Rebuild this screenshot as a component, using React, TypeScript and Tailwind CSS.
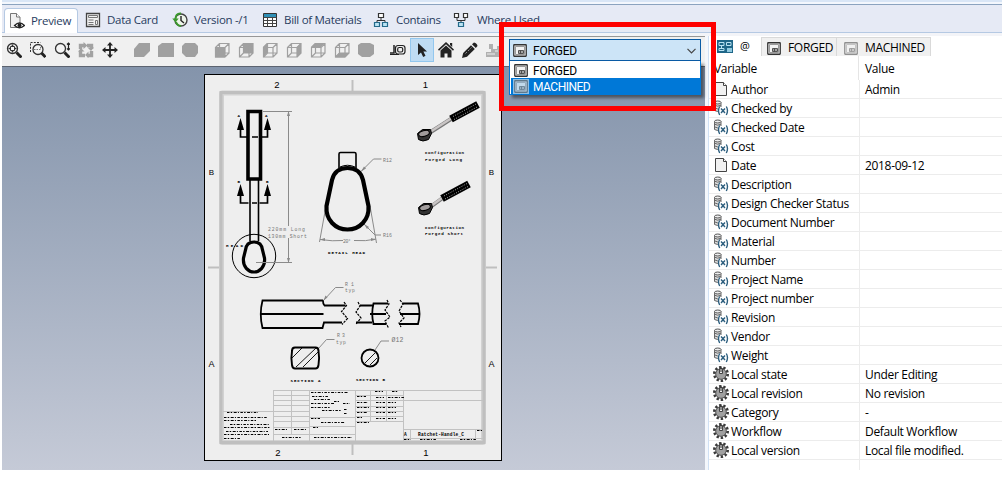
import React from "react";

type Kids = { children: React.ReactNode };

const Ico = ({ children, s = 16 }: Kids & { s?: number }) => (
  <svg width={s} height={s} viewBox="0 0 16 16" fill="none" className="block shrink-0">
    {children}
  </svg>
);

/* ---------- document tabs ---------- */

const PreviewIcon = () => (
  <Ico>
    <path d="M1.500.5h6l3.500 3.500v10.500h-9.500z" fill="#f0f0f0" stroke="#777" />
    <path d="M7.500.5v3.500h3.500" stroke="#777" fill="#fff" />
    <path d="M5.500 12.500q5-5 10 0q-5 4.500-10 0z" fill="#fff" stroke="#222" strokeWidth="1.200" />
    <circle cx="10.500" cy="12.300" r="1.900" fill="#222" />
  </Ico>
);
const CardIcon = () => (
  <Ico>
    <path d="M1.500 1.500h13v13h-13z" fill="#f2f2f2" stroke="#444" strokeWidth="1.300" />
    <path d="M3.500 3.500h9v2h-9zM3.500 8h5M3.500 10.500h5M3.500 12.500h5M10.500 8.500h2v4h-2z" stroke="#777" />
  </Ico>
);
const VersionIcon = () => (
  <Ico>
    <circle cx="9" cy="8" r="6" fill="#eef5ea" stroke="#444" strokeWidth="1.400" />
    <path d="M9 4v4.500l3 2.500" stroke="#222" strokeWidth="1.400" />
    <path d="M9 1.500C5 1 3.500 4 3.500 7" stroke="#3b982e" strokeWidth="2" />
    <path d="M.3 6.500h6.400L3.500 10.500z" fill="#3b982e" />
    <path d="M4 10q1 3.500 5 4" stroke="#3b982e" strokeWidth="2" />
  </Ico>
);
const BomIcon = () => (
  <Ico>
    <path d="M1.500 1.500h13v13h-13z" fill="#fff" stroke="#333" />
    <path d="M2 2h12v3H2z" fill="#2f8fb5" />
    <path d="M1.500 5.500h13M1.500 8.500h13M1.500 11.500h13M5.500 5v9.500M10.500 5v9.500" stroke="#444" />
  </Ico>
);
const ContainsIcon = () => (
  <Ico>
    <path d="M8 6v3M4 11V8.500h8V11" stroke="#333" />
    <path d="M5.500 1.500h5v4h-5z" fill="#fff" stroke="#333" strokeWidth="1.200" />
    <path d="M1.500 10.500h5v4h-5zM9.500 10.500h5v4h-5z" fill="#bce4f4" stroke="#246b8b" strokeWidth="1.200" />
  </Ico>
);
const WhereIcon = () => (
  <Ico>
    <path d="M4 6v2.500h8V6M8 8v3" stroke="#333" />
    <path d="M1.500 1.500h4v4h-4zM10.500 1.500h4v4h-4z" fill="#fff" stroke="#333" strokeWidth="1.200" />
    <path d="M5.500 10.500h5v4h-5z" fill="#bce4f4" stroke="#246b8b" strokeWidth="1.200" />
  </Ico>
);

/* ---------- toolbar ---------- */

const Lens = ({ kind }: { kind: "fit" | "area" | "zoom" }) => (
  <Ico>
    {kind === "area" && <path d="M.5 10V.5h10" stroke="#333" strokeDasharray="2 1.200" />}
    <circle cx={kind === "area" ? 8 : 6.500} cy={kind === "area" ? 7.500 : 6.500} r="5" fill="#f4f4f4" stroke="#333" strokeWidth="1.300" />
    <path d={kind === "area" ? "M11.500 11l4 4" : "M10.500 10.500l5 5"} stroke="#222" strokeWidth="3" />
    {kind === "fit" && (
      <>
        <path d="M4.500 4.500h4v4h-4z" stroke="#333" />
        <path d="M6.500 2.500v8M2.500 6.500h8" stroke="#333" strokeWidth="1.600" strokeDasharray="1.600 4.800" />
      </>
    )}
    {kind === "area" && <path d="M4 7.500h6.500V3" stroke="#777" strokeDasharray="1.500 1" />}
    {kind === "zoom" && <path d="M14.500 1v7M13 2.500L14.500 1l1.500 1.500M13 6.500L14.500 8l1.500-1.500" stroke="#222" strokeWidth="1.200" />}
  </Ico>
);
const RotateIcon = () => (
  <Ico>
    <path d="M2.500 7V3.500H7M9 3.500h4.500V7M2.500 9v4.500H7M9 13.500h4.500V9" stroke="#a2a2a2" strokeWidth="3.400" />
    <path d="M5.500 0v7l4-3.500zM16 5.500H9.500L13 9zM10.500 16V9.500L7 13zM0 9.500h6.500L3 6z" fill="#a2a2a2" />
  </Ico>
);
const PanIcon = () => (
  <Ico>
    <path d="M8 1v14M1 8h14" stroke="#222" strokeWidth="1.800" />
    <path d="M8 0l3 3.500H5zM8 16l3-3.500H5zM0 8l3.500-3v6zM16 8l-3.500-3v6z" fill="#222" />
  </Ico>
);
const Solid = ({ d }: { d: string }) => (
  <Ico>
    <path d={d} fill="#a0a0a0" />
  </Ico>
);
const faces = {
  front: "M1 5h10v10.500H1z",
  back: "M5 1h10v10H5z",
  left: "M1 5l4-4v10l-4 4.500z",
  right: "M11 5l4-4v10l-4 4.500z",
  top: "M1 5l4-4h10l-4 4z",
  bottom: "M1 15.500l4-4.500h10l-4 4.500z",
};
const Wire = ({ face }: { face: keyof typeof faces }) => (
  <Ico>
    <path d={faces[face]} fill="#a0a0a0" />
    <path d="M1.500 5.500h9.500v9.500H1.500zM5.500 1.500H15v9.500H5.500zM1.500 5.500l4-4M11 5.500l4-4M1.500 15l4-4M11 15l4-4" stroke="#a0a0a0" strokeWidth="1.200" />
  </Ico>
);
const MeasureIcon = () => (
  <Ico>
    <path d="M4 3v8H0" stroke="#222" strokeWidth="1.500" />
    <path d="M0 12.500h9" stroke="#222" />
    <rect x="5.500" y="3.500" width="9.500" height="8.500" rx="2.500" fill="#eee" stroke="#222" strokeWidth="1.200" />
    <rect x="7.700" y="5.500" width="5" height="4.500" rx="1.500" stroke="#222" strokeWidth="1.200" />
  </Ico>
);
const CursorIcon = () => (
  <Ico>
    <path d="M4 1v12l3-2.500 2.200 4.500 2.300-1.200L9.400 9.500H13z" fill="#222" />
  </Ico>
);
const HomeIcon = () => (
  <Ico>
    <path d="M8 0l8 7.500-1 1.200L8 2.300 1 8.700 0 7.500zM12 1h2.200v4L12 3z" fill="#222" />
    <path d="M8 3.500l5.500 5v7h-4v-4h-3v4h-4v-7z" fill="#222" />
  </Ico>
);
const PencilIcon = () => (
  <Ico>
    <path d="M0 16l1.200-5L9 3.200l3.800 3.800L5 14.800z" fill="#222" />
    <path d="M10 2.200L12 .5q3 .5 3.500 3.500l-1.700 2z" fill="#222" />
    <path d="M3.500 11.500l6-6" stroke="#999" strokeDasharray="2 1.500" />
  </Ico>
);
const StampIcon = () => (
  <Ico>
    <path d="M0 10h5V7H3V2h4v5h4V4h4v11H0z" fill="#b0b0b0" />
    <path d="M1 12h8M9 9h3" stroke="#eee" />
  </Ico>
);

/* ---------- data panel ---------- */

const SheetIcon = ({ faded = false }: { faded?: boolean }) => (
  <svg width="14" height="13" viewBox="0 0 14 13" fill="none" className={faded ? "block shrink-0 opacity-50" : "block shrink-0"}>
    <rect x=".75" y=".75" width="12.500" height="11.500" rx=".5" fill="#f3f3f3" stroke="#333" strokeWidth="1.300" />
    <path d="M2.500 10.500v-8h9v8z" stroke="#999" />
    <path d="M5.500 6.500h5v3h-5zM7.500 6.500v3M5.500 8h5" stroke="#444" strokeWidth=".9" />
  </svg>
);
const AtIcon = () => (
  <svg width="16" height="13" viewBox="0 0 16 13" fill="none" className="block shrink-0">
    <rect width="16" height="13" fill="#1e6688" />
    <path d="M2 2.500h5v3H2zM9.500 2.500h4.500v3H9.500zM4.500 5.500v3M2 10.500v-2h5v2z" stroke="#b8e2f2" />
    <path d="M10 8h5v4h-5z" fill="#8fc9e0" />
  </svg>
);
const DocIcon = () => (
  <Ico>
    <path d="M2.500 1.500h8l3 3v10h-11z" fill="#f1f1f1" stroke="#444" />
    <path d="M10.500 1.500v3h3" stroke="#444" fill="#fff" />
  </Ico>
);
const VarIcon = () => (
  <Ico>
    <path d="M1.500 2.500v8q3 2 6.500 0v-8" fill="#ddd" stroke="#666" />
    <ellipse cx="4.750" cy="2.500" rx="3.250" ry="1.500" fill="#eee" stroke="#555" />
    <path d="M1.500 5.200q3 2 6.500 0M1.500 7.900q3 2 6.500 0" stroke="#666" />
    <path d="M5 7h10v8H6z" fill="#fff" />
    <path d="M6.700 6.500q-2.400 4 0 8.500M13.300 6.500q2.400 4 0 8.500M8 8.500l4 4.500M12 8.500L8 13" stroke="#2b5d7d" strokeWidth="1.400" />
  </Ico>
);
const GearIcon = () => (
  <Ico>
    <circle cx="8" cy="8" r="6.600" stroke="#3a3a3a" strokeWidth="2.800" strokeDasharray="2.300 1.847" />
    <circle cx="8" cy="8" r="5.300" fill="#a0a0a0" stroke="#555" />
    <path d="M6.500 2.500h3v5h-3z" fill="#eee" stroke="#444" />
    <path d="M8 1v5" stroke="#333" />
  </Ico>
);

type Kind = "doc" | "var" | "gear";
const rows: [Kind, string, string][] = [
  ["doc", "Author", "Admin"],
  ["var", "Checked by", ""],
  ["var", "Checked Date", ""],
  ["var", "Cost", ""],
  ["doc", "Date", "2018-09-12"],
  ["var", "Description", ""],
  ["var", "Design Checker Status", ""],
  ["var", "Document Number", ""],
  ["var", "Material", ""],
  ["var", "Number", ""],
  ["var", "Project Name", ""],
  ["var", "Project number", ""],
  ["var", "Revision", ""],
  ["var", "Vendor", ""],
  ["var", "Weight", ""],
  ["gear", "Local state", "Under Editing"],
  ["gear", "Local revision", "No revision"],
  ["gear", "Category", "-"],
  ["gear", "Workflow", "Default Workflow"],
  ["gear", "Local version", "Local file modified."],
];

/* ---------- drawing sheet ---------- */

const Wrench = ({ x, y, hx, hy }: { x: number; y: number; hx: number; hy: number }) => (
  <g>
    <path d={`M${x + 6} ${y - 3}L${hx} ${hy}`} stroke="#777" strokeWidth="4" />
    <path d={`M${x + 6} ${y - 3.500}L${hx} ${hy - 0.500}`} stroke="#c9c5c5" strokeWidth="2.500" />
    <path d={`M${hx} ${hy}l27-14.500`} stroke="#000" strokeWidth="7.500" />
    <path d={`M${hx + 2} ${hy - 2.500}l24-13M${hx + 3} ${hy + 0.500}l24-13`} stroke="#aaa" strokeWidth="1" strokeDasharray="1 1.500" />
    <path d={`M${x - 6.500} ${y - 2}l5-4 8 0 1 4-3 6q-6 3-10 0z`} fill="#333" stroke="#000" />
    <ellipse cx={x} cy={y - 2} rx="5.500" ry="2.800" fill="#a19c9c" stroke="#000" transform={`rotate(-15 ${x} ${y - 2})`} />
  </g>
);

const Drawing = () => (
  <svg width="298" height="387" viewBox="204 74 298 387" fill="none" className="block">
    <rect x="204.500" y="74.500" width="297" height="386" fill="#eee" stroke="#000" />
    <g stroke="#d2d2d2" strokeWidth="5">
      <rect x="221.500" y="93" width="262" height="349.500" rx="1" />
    </g>
    <g stroke="#bfbfbf">
      <rect x="221" y="92.500" width="263" height="350" strokeWidth="3" />
      <path d="M352.500 80v11M352.500 444v11M208 267.500h11M486 267.500h11" strokeWidth="2" />
    </g>
    <g fill="#000" fontFamily="Liberation Sans, sans-serif" fontSize="9.500" textAnchor="middle">
      <text x="277" y="87.500">2</text>
      <text x="425.500" y="87.500">1</text>
      <text x="278" y="455.500">2</text>
      <text x="426" y="455.500">1</text>
      <text x="211.500" y="175" fontSize="8">B</text>
      <text x="491.500" y="175" fontSize="8">B</text>
      <text x="211.500" y="367" fontSize="9">A</text>
      <text x="491.500" y="367" fontSize="9">A</text>
    </g>

    {/* full view with section marks */}
    <g stroke="#000">
      <path d="M248 111.500h12.500v67.500h-12.500z" strokeWidth="3.600" />
      <path d="M250 180v61M258.500 180v61" strokeWidth="1.600" />
      <path d="M254 242c6 0 8 3 8.500 8l2 8c1 9-5 14-10.500 14s-11.500-5-10.500-14l2-8c.5-5 2.500-8 8.500-8z" strokeWidth="3.200" />
      <circle cx="254" cy="256" r="21.700" />
      <path d="M240.500 128v9h7M267.500 128v9h-6M252 137h6M240.500 194v9h8M267.500 194v9h-8M252 203h5" strokeWidth="1.700" />
    </g>
    <path d="M240.500 118l3.500 12h-7zM267.500 118l3.500 12h-7zM240.500 184l3.500 12h-7zM267.500 184l3.500 12h-7z" fill="#000" />
    <g stroke="#8a8a8a">
      <path d="M263 111.500h29M288.500 112v114M288.500 238v24M256 262.500h36" />
      <path d="M361 171.500l12.500-12.500h8M364 224l11 11h6M326 206l-6.500 36M370 206l6.500 37M320 239.500q13 2 23 1M354 240.500q12 1 22-1.500" />
      <path d="M323.500 300.500l12-13h8M318.500 348.500l8-9h8M375 350l6-9h8" />
    </g>
    <path d="M361 171.500l3-5 2 2zM364 224l5 3-2 2zM320 239.500l5-1.500v3zM376 239.500l-5-1.500v3zM288.500 111l-1.500 5h3zM288.500 263l-1.500-5h3zM323.500 300.500l2-5 2 2z" fill="#888" />

    {/* detail view */}
    <g stroke="#000">
      <path d="M339 168v-14q0-1.500 1.500-1.500h14q1.500 0 1.500 1.500v14" strokeWidth="1.600" />
      <path d="M347.500 168c8 0 13.500 4 15.500 12l5.500 26c1 14-9 23.500-21 23.500s-22-9.500-21-23.500l5.500-26c2-8 7.500-12 15.500-12z" strokeWidth="4.200" />
      <path d="M340 167q7.500-3.500 15 0" />
    </g>

    <Wrench x={424} y={135.500} hx={451} hy={119} />
    <Wrench x={425} y={209.500} hx={442} hy={198.500} />

    {/* broken side view */}
    <g stroke="#000" strokeWidth="1.800">
      <path d="M345.500 305.500h-21q-1.500-1-1.500-4.500l-.5-.5h-60q-3.500 14 0 27.500h60l1.500-5.500h18M260.500 314h63" />
      <path d="M360 305.500h12.500M356 322.500h16M388 303.500h-14.500q-2.500 10 0 20.500h12.500M370 314h16" />
      <path d="M402.500 303.500h15.500q3 10 0 20.500h-19M400 314h19" />
      <path d="M344 302l2.500 3.500-5 6 6 7-5.500 6M358 302l2 4-4 6 5 6-5 6M387 300l2 4-4 6 5 7-5 4 3.500 7M400 300l3 4-4 7 5 7-5 5 2 4" strokeWidth="1.200" strokeDasharray="2.500 1" />
    </g>

    {/* sections */}
    <g stroke="#000">
      <path d="M295 347.500h20.500q3 0 3 3.500 1.200 7 0 14-.5 3.500-3 3.500H295q-2.500 0-3-3.500-1.200-7 0-14 0-3.500 3-3.500z" strokeWidth="1.900" />
      <path d="M292 358l10-10M296 367l20-19M303 367l15-15" strokeWidth=".9" />
      <circle cx="370" cy="358" r="8.500" strokeWidth="1.800" />
      <path d="M365 363l10-10M370 365l7-7" strokeWidth=".9" />
    </g>

    <g fill="#000" fontFamily="Liberation Mono, monospace" fontSize="4.200" fontWeight="700">
      <text x="237.500" y="117">A</text>
      <text x="265" y="117">A</text>
      <text x="237.500" y="183">B</text>
      <text x="266" y="183">B</text>
      <text x="226" y="247" textLength="17">HEAD</text>
      <text x="328" y="254" textLength="37">DETAIL HEAD</text>
      <text x="425" y="154" textLength="39">Configuration</text>
      <text x="425" y="160.500" textLength="37">Forged Long</text>
      <text x="425" y="228.500" textLength="39">Configuration</text>
      <text x="425" y="234.500" textLength="38">Forged Short</text>
      <text x="290.500" y="382" textLength="30">SECTION A</text>
      <text x="356" y="381" textLength="29">SECTION B</text>
    </g>
    <g fill="#757575" fontFamily="Liberation Mono, monospace" fontSize="4.800">
      <text x="268" y="231" textLength="37">220mm Long</text>
      <text x="268" y="238" textLength="39">130mm Short</text>
      <text x="383" y="161.500" textLength="9">R12</text>
      <text x="383" y="236.500" textLength="9">R16</text>
      <text x="343" y="242.500" textLength="8">20°</text>
      <text x="345" y="285.500" textLength="9">R1</text>
      <text x="345" y="291.500" textLength="10">typ</text>
      <text x="337" y="336.500" textLength="8">R3</text>
      <text x="336" y="343.500" textLength="10">typ</text>
      <text x="391.500" y="342" fontSize="6.500" textLength="12">Ø12</text>
    </g>

    {/* title block */}
    <path
      d="M273 390.500h210M273.500 390v51M291.500 390v44M309.500 390v51M355.500 390v51M370.500 390v31M386.500 390v31M403.500 390v51M273 395.500h36M273 400.500h36M273 405.500h36M273 411.500h36M273 416.500h36M273 421.500h36M273 427.500h36M273 434.500h82M223 411.500h50M309 417.500h46M309 426.500h46M355 395.500h48M355 400.500h48M355 406.500h48M355 411.500h48M355 416.500h48M355 421.500h48M403 400.500h80M403 429.500h80M403 438.500h80M410.500 429v9M475.500 429v9"
      stroke="#c2c2c2"
    />
    <path
      d="M227 412.500h31M224 417.500h43M224 420.500h33M230 424.500h39M224 427.500h46M226 431.500h42M224 434.500h45M224 438.500h16M311 392.500h37M312 396.500h16M314 399.500h16M311 403.500h23M311 407.500h20M322 410.500h19M311 418.500h9M321 422.500h24M313 427.500h5M275 429.500h13M294 429.500h13M282 437.500h19M314 437.500h38M375 391.500h8M392 391.500h6M357 396.500h9M376 397.500h8M388 397.500h16M357 402.500h11M357 407.500h12M357 412.500h10M357 417.500h5M357 422.500h13M376 402.500h9M388 402.500h8M376 407.500h9M388 407.500h8M376 412.500h9M388 412.500h8M376 418.500h9M388 418.500h8M404 439.500h7M420 439.500h16M460 439.500h16M477 430.500h5M334 401.500h5M343 403.500h7M344 409.500h3M344 413.500h3"
      stroke="#000"
      strokeWidth="1.100"
      strokeDasharray="2.500 1.200 1.500 1.500 3 1.200 1 1.500"
    />
    <g fill="#000" fontFamily="Liberation Mono, monospace" fontWeight="700" fontSize="4.500">
      <text x="404" y="436">A</text>
      <text x="418" y="436" textLength="46">Ratchet-Handle_C</text>
    </g>
  </svg>
);

/* ---------- page ---------- */

const Cell = ({ children, on = false }: Kids & { on?: boolean }) => (
  <div className={on ? "flex h-6 w-6 items-center justify-center border border-[#93c7ee] bg-[#bfdcf3]" : "flex h-6 w-6 items-center justify-center"}>
    {children}
  </div>
);

const DocTab = ({ icon, label, w, gap = "gap-[6px]" }: { icon: React.ReactNode; label: string; w: string; gap?: string }) => (
  <div className={`flex h-6 items-center whitespace-nowrap ${gap} ${w}`}>
    {icon}
    <span>{label}</span>
  </div>
);

export default function App() {
  return (
    <div className="relative flex h-[477px] w-[1002px] flex-col overflow-hidden bg-white pl-[2px] font-['Open_Sans','Noto_Sans',sans-serif] text-[12px] leading-[18px] text-black">
      <div className="h-1 shrink-0 border-b-2 border-[#f3f7fd] bg-[#d9e6f6]" />
      <div className="flex h-[29px] shrink-0 items-end border-b border-t border-b-[#b5c9e3] border-t-[#8ba3bf] bg-[#e6eaf5] pl-[2px] text-[11.5px] tracking-[-0.3px] text-[#283c5e]">
        <div className="-mb-px flex h-[25px] w-[74px] items-center gap-[6px] rounded-t-sm border border-b-0 border-[#b5c9e3] bg-white pb-px pl-[4px]">
          <PreviewIcon />
          <span>Preview</span>
        </div>
        <div className="flex pl-[7px]">
          <DocTab w="w-[87px]" icon={<CardIcon />} label="Data Card" />
          <DocTab w="w-[90px]" icon={<VersionIcon />} label="Version -/1" />
          <DocTab w="w-[111px]" icon={<BomIcon />} label="Bill of Materials" />
          <DocTab w="w-[80px]" gap="gap-[7px]" icon={<ContainsIcon />} label="Contains" />
          <DocTab w="w-[90px]" gap="gap-[8px]" icon={<WhereIcon />} label="Where Used" />
        </div>
      </div>
      <div className="h-[3px] shrink-0 bg-[#f3f4f8]" />
      <div className="flex h-[434px] shrink-0">
        <div className="flex w-[703px] flex-col">
          <div className="flex h-[31px] shrink-0 items-start border-b border-t border-b-[#5c6370] border-t-[#979797] bg-[#f0f0f0] pt-px">
            <Cell><Lens kind="fit" /></Cell>
            <Cell><Lens kind="area" /></Cell>
            <Cell><Lens kind="zoom" /></Cell>
            <Cell><RotateIcon /></Cell>
            <Cell><PanIcon /></Cell>
            <div className="w-2" />
            <Cell><Solid d="M0 7l5-6h11v8l-6 6H0z" /></Cell>
            <Cell><Solid d="M0 4l4-3h12v14H0z" /></Cell>
            <Cell><Solid d="M3 1h10l3 3v7l-3 4H4l-4-4V4z" /></Cell>
            <div className="w-2" />
            <Cell><Wire face="front" /></Cell>
            <Cell><Wire face="back" /></Cell>
            <Cell><Wire face="left" /></Cell>
            <Cell><Wire face="right" /></Cell>
            <Cell><Wire face="top" /></Cell>
            <Cell><Wire face="bottom" /></Cell>
            <Cell><Solid d="M0 3l3-2h9l4 2v9l-4 3H4l-4-3z" /></Cell>
            <div className="w-2" />
            <Cell><MeasureIcon /></Cell>
            <Cell on><CursorIcon /></Cell>
            <Cell><HomeIcon /></Cell>
            <Cell><PencilIcon /></Cell>
            <Cell><StampIcon /></Cell>
          </div>
          <div className="h-[403px] bg-linear-to-b from-[#8494ab] to-[#c5cad7] pl-[202px] pt-[7px]">
            <Drawing />
          </div>
        </div>
        <div className="w-1 border-r border-[#cfe0f4] bg-[#f4f7fc]" />
        <div className="flex w-[293px] flex-col bg-white tracking-[-0.32px]">
          <div className="flex h-5 shrink-0 items-end">
            <div className="flex h-[19px] w-[52px] items-center gap-[7px] pl-2">
              <AtIcon />
              <span className="pb-px text-[11px]">@</span>
            </div>
            <div className="flex h-[19px] w-[76px] items-center gap-[7px] border-x border-t border-[#d9d9d9] bg-[#f0f0f0] pl-[5px] pt-[2px]">
              <SheetIcon />
              <span>FORGED</span>
            </div>
            <div className="flex h-[19px] w-[94px] items-center gap-[7px] border-r border-t border-[#d9d9d9] bg-[#f0f0f0] pl-[7px] pt-[2px]">
              <SheetIcon faded />
              <span>MACHINED</span>
            </div>
          </div>
          <div className="flex h-6 shrink-0 items-center">
            <div className="flex h-full w-[150px] items-center border-r border-[#e5e5e5] pl-[5px] pt-px">Variable</div>
            <div className="pl-[6px] pt-px">Value</div>
          </div>
          {rows.map(([kind, name, value]) => (
            <div key={name} className="flex h-[19px] shrink-0 border-b border-[#ececec]">
              <div className="flex w-[151px] items-center gap-[2px] border-r border-[#ececec] pl-1">
                {kind === "doc" ? <DocIcon /> : kind === "var" ? <VarIcon /> : <GearIcon />}
                <span className="pt-[2px]">{name}</span>
              </div>
              <div className="flex items-center pl-[5px] pt-[2px]">{value}</div>
            </div>
          ))}
          <div className="h-[10px] w-[151px] shrink-0 border-r border-[#ececec]" />
        </div>
      </div>

      <div className="absolute left-[499px] top-[22px] h-[89px] w-[217px] border-[5px] border-[#fe0000]" />
      <div className="absolute left-[509px] top-[39px] w-[192px] font-[Roboto,sans-serif] text-[12px] leading-[14px] tracking-[-0.2px]">
        <div className="flex h-[22px] items-center gap-[6px] border border-[#0a5ba5] bg-[#cce4f7] pl-[3px] pr-1 pt-px">
          <SheetIcon />
          <span className="grow pt-px">FORGED</span>
          <svg width="9" height="6" viewBox="0 0 9 6" fill="none">
            <path d="M.5.8l4 4 4-4" stroke="#444" strokeWidth="1.200" />
          </svg>
        </div>
        <div className="border border-t-0 border-[#0078d7] bg-white pl-px shadow-[3px_3px_3px_rgba(0,0,0,0.45)]">
          <div className="flex h-[17px] items-center gap-[5px] pl-[3px] pt-px">
            <SheetIcon />
            <span className="pt-px">FORGED</span>
          </div>
          <div className="flex h-4 items-center gap-1 bg-[#0078d7] pl-[2px] tracking-[-0.5px] text-white">
            <div className="bg-[#8fbfe4] p-px">
              <SheetIcon faded />
            </div>
            <span className="pt-px">MACHINED</span>
          </div>
        </div>
      </div>
    </div>
  );
}
